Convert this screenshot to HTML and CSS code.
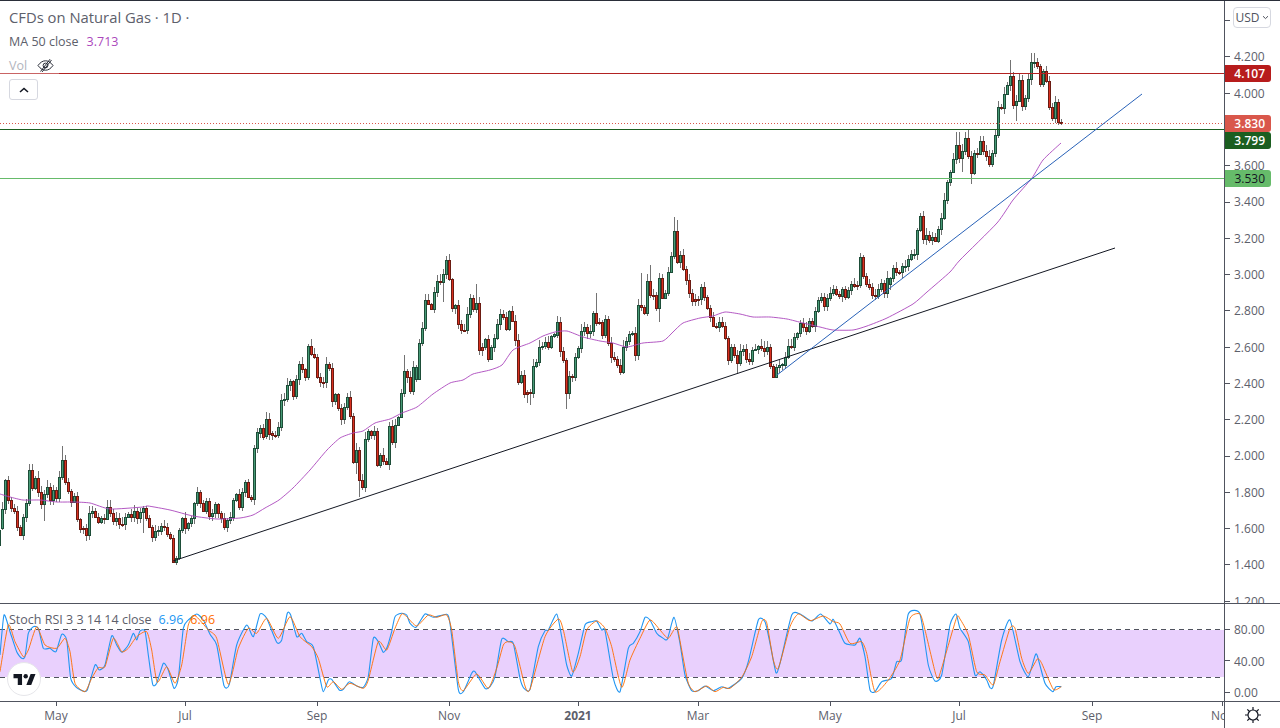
FILE: index.html
```html
<!DOCTYPE html>
<html lang="en">
<head>
<meta charset="utf-8">
<title>CFDs on Natural Gas</title>
<link rel="stylesheet" href="styles.css">
</head>
<body>
<div class="chart">
  <div class="panes">
    <section class="pane price-pane">
      <svg class="plot" width="1224" height="602" viewBox="0 1 1224 602" xmlns="http://www.w3.org/2000/svg">
        <g id="candles"></g>
        <path id="ma" class="ma-line"></path>
        <line class="h-line h-red" x1="0" x2="1224" y1="73.5" y2="73.5"></line>
        <line class="h-line h-dot" x1="0" x2="1224" y1="123.5" y2="123.5"></line>
        <line class="h-line h-dark" x1="0" x2="1224" y1="129.5" y2="129.5"></line>
        <line class="h-line h-green" x1="0" x2="1224" y1="178.5" y2="178.5"></line>
        <line class="trend trend-black" x1="173" y1="561" x2="1115" y2="248"></line>
        <line class="trend trend-blue" x1="777" y1="375" x2="1142" y2="94"></line>
      </svg>
      <div class="legend">
        <div class="legend-row title">CFDs on Natural Gas · 1D ·</div>
        <div class="legend-row">MA 50 close<span class="ma-val">3.713</span></div>
        <div class="legend-row vol"><span>Vol</span><svg class="eye" width="17" height="15" viewBox="0 0 17 15" xmlns="http://www.w3.org/2000/svg">
            <path d="M1 7.5C3.5 4 6 2.8 8.5 2.8S13.5 4 16 7.5C13.5 11 11 12.2 8.5 12.2S3.5 11 1 7.5Z"></path>
            <circle cx="8.5" cy="7.5" r="2.4"></circle>
            <path d="M3.5 13.5 13 1.2M5 14 14.5 2"></path>
          </svg></div>
      </div>
      <button class="collapse" type="button" aria-label="Collapse">
        <svg width="10" height="6" viewBox="0 0 10 6" xmlns="http://www.w3.org/2000/svg"><path d="M1 5 5 1.5 9 5"></path></svg>
      </button>
    </section>
    <section class="pane rsi-pane">
      <svg class="plot" width="1224" height="97" viewBox="0 604 1224 97" xmlns="http://www.w3.org/2000/svg">
        <rect class="band" x="0" y="630" width="1224" height="47"></rect>
        <line class="dash" x1="0" x2="1224" y1="629.5" y2="629.5"></line>
        <line class="dash" x1="0" x2="1224" y1="677.5" y2="677.5"></line>
        <path id="k" class="k-line"></path>
        <path id="d" class="d-line"></path>
      </svg>
      <div class="rsi-legend">Stoch RSI 3 3 14 14 close<span class="k-val">6.96</span><span class="d-val">6.96</span></div>
      <div class="tv-logo">
        <svg width="23" height="11" viewBox="0 0 36 18" xmlns="http://www.w3.org/2000/svg"><path d="M14 0H0v7h7v11h7V0Zm15 18h-8L28 0h8l-7 18Z"></path><circle cx="20" cy="3.6" r="3.6"></circle></svg>
      </div>
    </section>
    <div class="time-axis">
      <span class="time-cell" style="width:129px"><b>May</b></span>
      <span class="time-cell" style="width:132px"><b>Jul</b></span>
      <span class="time-cell" style="width:132px"><b>Sep</b></span>
      <span class="time-cell" style="width:129px"><b>Nov</b></span>
      <span class="time-cell" style="width:120px"><b class="year">2021</b></span>
      <span class="time-cell" style="width:132px"><b>Mar</b></span>
      <span class="time-cell" style="width:129px"><b>May</b></span>
      <span class="time-cell" style="width:133px"><b>Jul</b></span>
      <span class="time-cell" style="width:130px"><b>Sep</b></span>
      <span class="time-cell" style="width:40px"><b>Nov</b></span>
    </div>
  </div>
  <aside class="scale">
    <div class="price-scale">
      <div class="tick"></div>
      <div class="tick">4.200</div>
      <div class="tick">4.000</div>
      <div class="tick"></div>
      <div class="tick">3.600</div>
      <div class="tick">3.400</div>
      <div class="tick">3.200</div>
      <div class="tick">3.000</div>
      <div class="tick">2.800</div>
      <div class="tick">2.600</div>
      <div class="tick">2.400</div>
      <div class="tick">2.200</div>
      <div class="tick">2.000</div>
      <div class="tick">1.800</div>
      <div class="tick">1.600</div>
      <div class="tick">1.400</div>
      <div class="tick">1.200</div>
      <div class="currency">USD
        <svg width="7" height="5" viewBox="0 0 7 5" xmlns="http://www.w3.org/2000/svg"><path d="M1 1.2 3.5 3.6 6 1.2"></path></svg>
      </div>
      <div class="tag tag-red">4.107</div>
      <div class="tag tag-last">3.830</div>
      <div class="tag tag-dark">3.799</div>
      <div class="tag tag-green">3.530</div>
    </div>
    <div class="rsi-scale">
      <div class="tick rsi-tick">80.00</div>
      <div class="tick rsi-tick">40.00</div>
      <div class="tick rsi-tick">0.00</div>
    </div>
    <div class="corner">
      <svg width="18" height="18" viewBox="0 0 18 18" xmlns="http://www.w3.org/2000/svg">
        <circle cx="9" cy="9" r="5"></circle>
        <path d="M9 1v3M9 14v3M1 9h3M14 9h3M3.3 3.3l2.2 2.2M12.5 12.5l2.2 2.2M3.3 14.7l2.2-2.2M12.5 5.5l2.2-2.2"></path>
      </svg>
    </div>
  </aside>
</div>
<script src="chart.js"></script>
</body>
</html>
```

FILE: styles.css
```css
* { box-sizing: border-box; }
html, body { margin: 0; padding: 0; background: #fff; }
body {
  width: 1280px;
  height: 728px;
  overflow: hidden;
  font-family: "Open Sans", "Liberation Sans", sans-serif;
  font-size: 12px;
  color: #5d606b;
}
.chart {
  display: flex;
  width: 1280px;
  height: 728px;
  border-top: 1px solid #2a2e39;
}
.panes { width: 1224px; display: flex; flex-direction: column; }
.pane { position: relative; }
.price-pane { height: 603px; border-bottom: 1px solid #50535e; }
.rsi-pane { height: 98px; border-bottom: 1px solid #50535e; }
.plot { display: block; }

.wick { stroke: #737373; stroke-width: 1; shape-rendering: crispEdges; }
.edge-g { fill: #1d4d38; }
.edge-r { fill: #6b1b12; }
.fill-g { fill: #479a76; }
.fill-r { fill: #d9301f; }
.ma-line { fill: none; stroke: #ab47bc; stroke-width: 1; opacity: .9; }
.h-line { stroke-width: 1; shape-rendering: crispEdges; }
.h-red { stroke: #b22222; }
.h-dot { stroke: #d9574b; stroke-dasharray: 1 2; }
.h-dark { stroke: #1b5e20; }
.h-green { stroke: #66bb6a; }
.trend { stroke-width: 1; }
.trend-black { stroke: #131722; }
.trend-blue { stroke: #2962b8; }

.legend { position: absolute; left: 0; top: 5px; display: flex; flex-direction: column; align-items: flex-start; }
.legend-row { height: 23.75px; line-height: 23.75px; padding-left: 9px; font-size: 12.5px; color: #5d606b; white-space: nowrap; display: flex; align-items: center; }
.legend-row.title { font-size: 14.8px; }
.ma-val { color: #ab47bc; margin-left: 8px; }
.vol { color: #b2b5be; background: rgba(255, 255, 255, .3); padding-right: 5px; }
.eye { margin-left: 10px; fill: none; stroke: #2a2e39; stroke-width: 1; }
.collapse {
  position: absolute; left: 9px; top: 78px; width: 29px; height: 21px; padding: 0;
  display: flex; align-items: center; justify-content: center;
  background: #fff; border: 1px solid #d6d8e0; border-radius: 3px;
}
.collapse path { fill: none; stroke: #131722; stroke-width: 1.6; }

.band { fill: #e9d0fd; }
.dash { stroke: #50535e; stroke-width: 1; stroke-dasharray: 5 4; shape-rendering: crispEdges; }
.k-line { fill: none; stroke: #2196f3; stroke-width: 1.1; }
.d-line { fill: none; stroke: #ff6d00; stroke-width: 1; opacity: .9; }
.rsi-legend { position: absolute; left: 9px; top: 7px; line-height: 18px; font-size: 12.5px; color: #5d606b; white-space: nowrap; }
.k-val { color: #2196f3; margin-left: 7px; }
.d-val { color: #ff6d00; margin-left: 7px; }
.tv-logo {
  position: absolute; left: 7px; top: 58px; width: 34px; height: 34px; border-radius: 50%;
  background: #fff; border: 1px solid #e6e6ea;
  display: flex; align-items: center; justify-content: center;
}
.tv-logo svg { fill: #131722; }

.time-axis { flex: 1; display: flex; padding-left: 56px; overflow: hidden; }
.time-cell { position: relative; flex: none; height: 26px; }
.time-cell::before { content: ""; position: absolute; left: 0; top: 0; width: 1px; height: 4px; background: #50535e; }
.time-cell b { position: absolute; left: -20px; top: 4px; width: 40px; text-align: center; font-weight: 400; line-height: 20px; }
.time-cell b.year { font-weight: 700; }

.scale { width: 56px; border-left: 1px solid #50535e; display: flex; flex-direction: column; }
.price-scale { position: relative; height: 603px; padding-top: 1px; border-bottom: 1px solid #50535e; overflow: hidden; }
.tick { position: relative; height: 36.29px; line-height: 36.29px; padding: 1px 0 0 9px; white-space: nowrap; }
.tick::before { content: ""; position: absolute; left: 0; top: 50%; width: 5px; height: 1px; background: #50535e; }
.rsi-scale { height: 98px; padding-top: 9px; border-bottom: 1px solid #50535e; }
.rsi-tick { height: 31.5px; line-height: 31.5px; }
.corner { flex: 1; display: flex; align-items: center; justify-content: center; }
.corner svg { fill: none; stroke: #131722; stroke-width: 1.2; }

.currency {
  position: absolute; left: 8px; top: 6px; width: 38px; height: 21px;
  border: 1px solid #d6d8e0; border-radius: 4px; background: #fff;
  display: flex; align-items: center; justify-content: center; gap: 2px; color: #50535e;
}
.currency path { fill: none; stroke: #50535e; stroke-width: 1; }
.tag {
  position: absolute; left: 0; width: 46px; height: 17px; line-height: 17px; text-align: right; padding-right: 6px;
  color: #fff; font-weight: 600; border-radius: 0 3px 3px 0;
}
.tag-red { top: 64px; background: #b71c1c; }
.tag-last { top: 114px; background: #d9574b; }
.tag-dark { top: 131px; background: #1b5e20; }
.tag-green { top: 169px; background: #66bb6a; color: #131722; font-weight: 400; }
```

FILE: chart.js
```js
var SEGS = [
  [-1, 440, "g270,315 g208,265 g120,208 r120,180 r180,205 r205,212 r212,260 r260,285 g232,285 g190,232 g90,190 r90,145 g115,145 r115,157 r157,192 g163,192 g142,163 r142,180 g150,180 r150,175 g112,175 g60,112 r60,127 r127,152 r152,187 g168,187 r168,238 r238,268 r265,268 r265,285 g218,285 g212,218 r212,230 r230,247 g233,247 r233,238 g200,238 r200,220 r220,243 g235,243 r235,253 r252,254 g232,253 g223,232 r223,230 g213,230 r213,235 g217,235 g203,217 r203,235 r235,262 r262,292 g272,292 g270,272 g258,272 r258,262 r262,283 r283,295 r295,365 g355,365 g270,355 g235,270 r235,265 g248,265 g235,248 g188,235 g157,188 r157,188 r188,212 g183,212 r183,228 g218,228 g193,218 r193,220 r220,235 r235,260 g240,260 g230,240 g180,230 g162,180 r162,200 g157,200 g127,157 r127,170 r170,178 g25,178 g-25,25"],
  [86, 250, "g535,548 r535,560 g508,558 r508,553 r550,556 r555,557 g530,556 g450,530 g447,450 g405,447 g393,405 r393,437 g387,437 g343,387 r343,357 r357,382 g288,382 r288,313 r313,322 r322,380 r380,395 r395,397 g343,397 r343,355 r355,452 g433,452 r433,475 r475,507 g472,507 g442,472 r442,498 r498,637 g600,637 r600,690 r690,710 g568,710 g542,568 r542,555 g542,555 r542,645 g616,645 r616,633 r633,643 g528,643 r528,575 g525,575 g500,525 g428,500 g362,428 r362,382 r382,423 g352,423 g352,388 g278,388 g233,278 g150,233 r150,163 r163,178 g127,178 g92,127 r92,97 g73,97 g30,73 r30,88 r88,175 g165,175 r165,223 r223,240 r239,241 g192,240 g145,192 r145,178 g160,178 r160,300 r290,300 g268,290 r268,328 g290,328 g265,290 g223,265 g193,223 r193,200 r200,238 g183,238"],
  [170, 210, "r303,333 r333,390 r390,517 g495,517 r495,553 r545,553 r545,550 g468,550 g455,468 g412,455 g408,412 g396,408 r396,412 g378,412 g372,378 g337,375 r337,424 r424,451 r451,550 g497,550 r497,502 g442,502 g415,442 g362,415 g350,362 r350,370 g362,370 g310,362 r310,340 r335,340 r335,376 g328,376 r328,400 r400,442 r442,448 r448,466 r466,487 g412,487 g393,412 g371,393 g368,371 r368,436 g286,436 r286,290 r290,310 g214,310 r214,256 r255,257 r256,293 g205,293 r205,265 g250,265 g187,250 g138,187 g64,138 r64,157 g136,157 r136,178 r178,211 r211,248 r248,272 r268,272 r267,269 g232,268 r232,260 r260,295 r295,322 r322,347 r347,352 g335,352 r335,347 r347,385 r385,449 g412,449 r412,436 r436,460 g423,460 g416,423 r416,448 r448,452"],
  [250, 230, "g360,392 g358,360 g347,358 r347,355 r355,362 g352,362 r352,408 r408,440 g412,440 g405,412 g402,405 g382,405 g347,382 r347,350 g322,350 g310,322 g280,310 r280,290 r290,303 g273,303 r273,287 g243,287 g210,243 g202,210 r202,227 g205,227 g190,205 g178,190 r178,192 r192,198 g178,198 r178,200 g180,200 g163,180 r163,168 r165,168 g82,165 r82,138 r138,163 r163,170 r170,195 r195,197 g178,197 g160,178 r160,190 g145,190 g143,163 g115,145 r115,125 r125,127 g108,127 g107,109 g88,108 g72,88 g71,73 g0,72"],
  [306, 40, "g529,571 r529,598 g586,598 r586,600 g590,600 r590,604 g568,604 g535,568 g481,535 g427,481 g397,427 g358,397 g316,358 r316,355 g333,355 g295,333 r295,349 r349,400 g340,400 r340,343 g304,343 r304,334 r334,347 r347,373 g340,373 g286,340 g202,286 r202,205 g163,205 g136,163 g109,136 r109,196 g184,196 g121,184 r121,199 g175,199 g118,175 g67,118 g66,68 r67,79 r79,133 g94,133 r94,124 r124,202 r202,235 g187,235 r187,247 r247,250"]
];

/* Long wicks read off the chart: bar index -> [high y, low y]; 0 means "use the default". */
var WICKS = {
  9: [464, 0], 10: [464, 0], 14: [0, 521], 20: [446, 0], 47: [0, 533], 57: [0, 563],
  103: [339, 0], 118: [0, 474], 119: [0, 497], 134: [355, 0], 147: [0, 302], 148: [256, 0], 158: [284, 0],
  175: [0, 403], 176: [0, 405], 188: [0, 409], 198: [293, 0], 213: [273, 0], 216: [265, 0], 219: [0, 322],
  224: [217, 0], 225: [220, 0], 245: [0, 374], 257: [0, 377], 258: [0, 377], 286: [253, 0],
  318: [132, 0], 319: [132, 0], 320: [0, 172], 322: [130, 0], 323: [0, 184],
  336: [60, 0], 338: [0, 121], 343: [53, 0], 344: [53, 0]
};

var SVG_NS = "http://www.w3.org/2000/svg";

function noise(n) {
  var v = Math.sin(n * 12.9898) * 43758.5453;
  return v - Math.floor(v);
}

function addRect(parent, cls, x, y, w, h) {
  var r = document.createElementNS(SVG_NS, "rect");
  r.setAttribute("class", cls);
  r.setAttribute("x", x);
  r.setAttribute("y", y);
  r.setAttribute("width", w);
  r.setAttribute("height", h);
  r.setAttribute("shape-rendering", "crispEdges");
  parent.appendChild(r);
}

function addWick(parent, x, y1, y2) {
  var l = document.createElementNS(SVG_NS, "line");
  l.setAttribute("class", "wick");
  l.setAttribute("x1", x + 0.5);
  l.setAttribute("x2", x + 0.5);
  l.setAttribute("y1", y1);
  l.setAttribute("y2", y2);
  parent.appendChild(l);
}

function drawCandles() {
  var group = document.getElementById("candles");
  SEGS.forEach(function (seg) {
    seg[2].split(" ").forEach(function (token, n) {
      var i = seg[0] + n;
      var dir = token.charAt(0);
      var parts = token.slice(1).split(",");
      var top = Math.round(seg[1] + parts[0] / 3);
      var bot = Math.max(top + 1, Math.round(seg[1] + parts[1] / 3));
      var cx = 2 + 3 * i;
      var over = WICKS[i] || [0, 0];
      var hi = over[0] || top - Math.round(1 + noise(i + 1) * 6);
      var lo = over[1] || bot + Math.round(1 + noise(i + 400) * 5);
      addWick(group, cx, hi, lo);
      addRect(group, "edge-" + dir, cx - 1, top, 3, bot - top + 1);
      if (bot - top > 1) addRect(group, "fill-" + dir, cx, top + 1, 1, bot - top - 1);
    });
  });
}

/* Gentle spline: a low tension keeps the curves from overshooting their turning points. */
function smooth(pts) {
  var t = 10;
  var d = "M" + pts[0][0].toFixed(1) + " " + pts[0][1].toFixed(1);
  for (var i = 0; i < pts.length - 1; i++) {
    var p0 = pts[i - 1] || pts[i], p1 = pts[i], p2 = pts[i + 1], p3 = pts[i + 2] || p2;
    d += "C" + (p1[0] + (p2[0] - p0[0]) / t).toFixed(1) + " " + (p1[1] + (p2[1] - p0[1]) / t).toFixed(1) +
      " " + (p2[0] - (p3[0] - p1[0]) / t).toFixed(1) + " " + (p2[1] - (p3[1] - p1[1]) / t).toFixed(1) +
      " " + p2[0].toFixed(1) + " " + p2[1].toFixed(1);
  }
  return d;
}

function fromCrop(ox, oy, list) {
  var out = [];
  for (var i = 0; i < list.length; i += 2) out.push([ox + list[i] / 3, oy + list[i + 1] / 3]);
  return out;
}

var MA = [
  [0,494],[10,497],[23,500],[40,500],[57,502],[73,502],[90,503],[110,509],[143,507],[148,506],[170,510],[193,516],
  [217,519],[240,518],[253,515],[265,508],[279,500],[293,488],[310,470],[327,450],[340,438],[353,433],[363,431],
  [375,423],[390,419],[402,413],[417,407],[433,394],[450,383],[463,380],[473,374],[490,370],[502,365],[513,350],
  [530,343],[543,336],[555,332],[567,331],[583,337],[600,341],[613,343],[627,347],[643,343],[663,341],[673,332],
  [683,323],[700,318],[713,316],[725,312],[740,314],[753,317],[770,317],[787,319],[803,323],[820,327],[833,330],
  [853,330],[867,326],[887,318],[913,304],[927,292],[950,272],[960,260],[997,223],[1013,200],[1032,178],[1043,160],[1061,143]
];

var K = [].concat(
  fromCrop(0, 595, [0,180,12,60,30,110,50,170,65,190,75,185,85,115,100,95,115,100,130,160,150,160,168,170,185,118,200,135,212,250,230,278,250,288,262,285,285,210,298,225,315,210,335,122,350,150,365,172,385,150,400,115,410,135,420,108,435,108,445,180,458,268,470,265,490,205,505,225,522,280,535,250,550,100,565,75,590,57,610,75,630,118,650,150,672,272,688,268,710,150,740,90,760,125,780,57,800,70,830,142,845,135,862,55,872,60,890,125,905,115,920,140,940,155,960,250]),
  fromCrop(300, 600, [70,275,85,240,95,238,118,270,130,268,148,245,170,258,190,262,205,230,220,115,235,125,250,157,262,140,275,95,285,50,305,40,320,45,330,70,348,82,375,42,400,52,440,43,450,70,475,268,490,275,515,220,525,215,555,265,570,260,585,230,605,118,625,125,640,130,660,235,672,265,690,268,715,140,735,92,745,90,770,42,785,110,800,195,815,228,835,160,855,75,875,65,890,63,905,90,915,92,940,235,960,275,985,145]),
  fromCrop(630, 600, [10,130,30,95,45,52,60,60,80,100,95,112,112,118,132,52,150,130,165,225,185,272,205,272,225,258,250,272,275,260,295,265,335,235,355,185,385,60,405,65,420,130,438,218,450,190,485,45,510,42,545,63,572,42,600,72,610,58,630,100,645,130,675,135,690,115,705,170,720,270,735,275,755,245,785,235,800,185,815,178,835,42,870,42,895,195,915,243,935,225,960,75,978,42]),
  fromCrop(960, 595, [0,100,25,140,45,240,60,230,80,255,90,278,100,272,125,135,150,75,180,200,205,245,225,182,232,182,255,265,278,290,288,275,304,275])
);

var D = [].concat(
  fromCrop(0, 595, [0,230,25,90,45,140,70,185,85,165,110,95,135,150,170,160,195,130,210,170,225,265,255,290,275,250,295,218,315,215,340,130,365,170,385,160,410,125,440,110,455,165,472,262,500,215,525,265,545,210,565,90,585,62,625,105,650,130,685,268,715,160,745,100,770,115,800,70,835,130,870,65,900,125,935,155,955,190]),
  fromCrop(300, 600, [80,260,100,245,125,268,150,250,190,265,205,240,235,125,260,150,285,85,305,42,320,50,350,78,385,45,410,52,440,45,455,90,475,245,490,272,530,222,565,265,590,205,610,135,625,125,645,140,675,258,690,268,735,110,775,57,790,90,818,215,840,170,860,90,890,63,915,85,935,140,965,262]),
  fromCrop(630, 600, [0,180,30,115,60,60,90,90,115,115,140,80,155,150,175,250,195,275,230,258,255,275,280,262,300,265,335,232,365,170,395,65,410,68,430,180,445,205,480,80,505,42,540,62,580,48,610,65,630,72,660,130,695,125,710,160,735,275,775,240,810,180,840,55,870,42,885,90,915,215,925,235,945,170,980,52]),
  fromCrop(960, 595, [0,72,25,120,50,230,75,240,100,270,120,200,150,100,165,100,185,190,205,235,232,192,245,205,280,283,304,275])
);

drawCandles();
document.getElementById("ma").setAttribute("d", smooth(MA));
document.getElementById("k").setAttribute("d", smooth(K));
document.getElementById("d").setAttribute("d", smooth(D));
```
